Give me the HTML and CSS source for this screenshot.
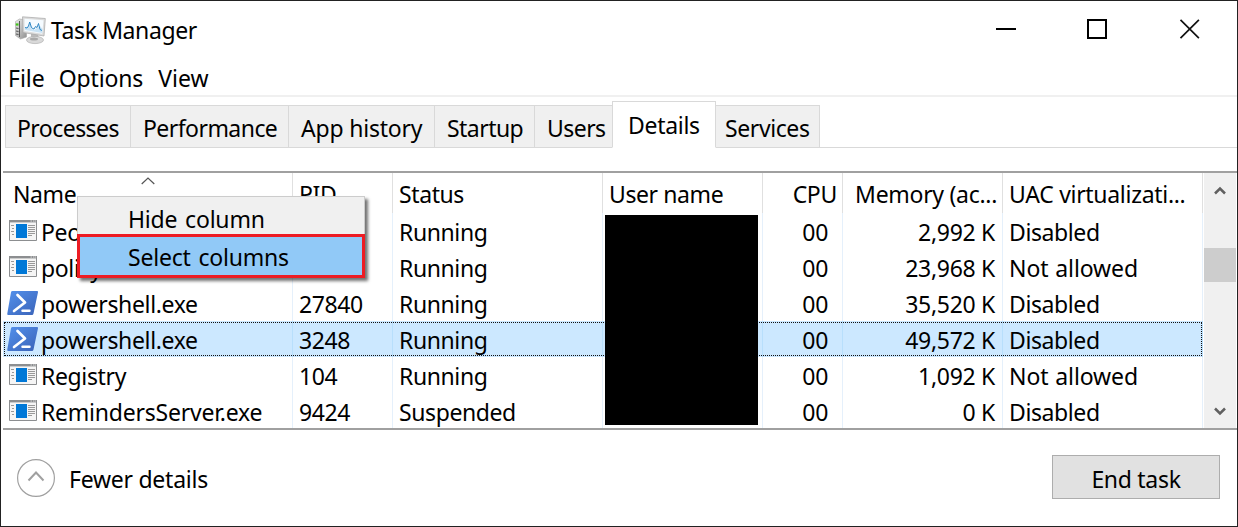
FILE: index.html
```html
<!DOCTYPE html>
<html lang="en">
<head>
<meta charset="utf-8">
<title>Task Manager</title>
<link rel="stylesheet" href="styles.css">
</head>
<body>
<svg class="defs" width="0" height="0">
  <defs>
    <linearGradient id="psg" x1="0" y1="0" x2="1" y2="1"><stop offset="0" stop-color="#5391ec"/><stop offset="1" stop-color="#3b63b8"/></linearGradient>
    <linearGradient id="metal" x1="0" y1="0" x2="1" y2="1"><stop offset="0" stop-color="#eee"/><stop offset="1" stop-color="#8f8f8f"/></linearGradient>
    <symbol id="app" viewBox="0 0 28 21">
      <path fill="#f5f5f5" d="M0 0h28v21H0z"/>
      <path fill="none" stroke="#8c8e90" d="M.5.5h27v20H.5z"/>
      <path fill="#8c8e90" d="M0 0h28v2.400H0z"/>
      <path stroke="#d9d9d9" d="M21.500 1h1.500M24 1h1.500M26 1h1"/>
      <path fill="#0078d7" d="M7 4h11v14H7z"/>
      <path stroke="#999" d="M2 5.500h3M3 8.500h2M2 11.500h3M3 14.500h2M19 5.500h7M19 7.500h7M19 9.500h7M19 11.500h7M19 13.500h7M19 15.500h4"/>
    </symbol>
    <symbol id="ps" viewBox="0 0 32 24">
      <path fill="url(#psg)" d="M5.500 0H30q1.300 0 1 1.300l-4.500 21.200Q26.200 24 25 24H1.200Q0 24 .3 22.500L4 1.300Q4.200 0 5.500 0z"/>
      <path fill="none" stroke="#fff" stroke-width="2.700" stroke-linecap="round" stroke-linejoin="round" d="M10.500 4l7.500 7.500L7 20"/>
      <path stroke="#fff" stroke-width="2.500" stroke-linecap="round" d="M15.500 19.700h7"/>
    </symbol>
  </defs>
</svg>
<div class="window">
  <header class="titlebar">
    <svg class="logo" width="32" height="30" viewBox="0 0 32 30">
      <path fill="url(#metal)" stroke="#a5a5a5" stroke-width=".6" d="M.5 5.500l4-2.500 7 1v17l-6 2-5-3.500z"/>
      <path stroke="#555" stroke-width="1" d="M1 12l2.500.5M1 15l2.500.5M1 18l2.500.5M4.500 5v16"/>
      <path stroke="#43c51c" stroke-width="2.200" d="M.8 8.500H3.500"/>
      <path fill="#bbb" d="M16 18h7l1 5h-8z"/>
      <ellipse cx="20" cy="24" rx="8.500" ry="3.600" fill="#d9d9d9" stroke="#b0b0b0" stroke-width=".7"/>
      <ellipse cx="19" cy="23" rx="4" ry="1.500" fill="#aaa"/>
      <path fill="#dcdcdc" stroke="#a6a6a6" stroke-width=".7" d="M7.500.8L30.300 2.500l-1.300 17.500L8 16.500z"/>
      <path fill="#f5fbff" d="M9.500 2.800l19 1.400-1.300 13.500L9.500 15z"/>
      <path fill="#c9e3f5" d="M10 12l3-1 2-5 2 7 2 1 3-2 3-2 2.500 3-.3 4L10 14z"/>
      <path fill="none" stroke="#2f87c4" stroke-width="1" d="M10 11.500l2 .5 1.500-2 1.200-4 1.600 5 1.200 1.500 1.500.5 1.500-2.500 1.500 1 1.500-4 1.500 6 2 1"/>
    </svg>
    <h1>Task Manager</h1>
    <svg class="controls" width="206" height="22" viewBox="0 0 206 22">
      <path fill="none" stroke="#000" stroke-width="2" d="M1 10h20M93 1h18v18H93z"/>
      <path fill="none" stroke="#111" stroke-width="1.700" d="M185.500.8l18.400 18.400M203.900.8l-18.400 18.400"/>
    </svg>
  </header>
  <nav class="menubar"><span class="m1">File</span><span class="m2">Options</span><span class="m3">View</span></nav>
  <div class="tabs">
    <div class="tab t1">Processes</div><div class="tab t2">Performance</div><div class="tab t3">App history</div><div class="tab t4">Startup</div><div class="tab t5">Users</div><div class="tab active">Details</div><div class="tab t7">Services</div><div class="rest"></div>
  </div>
  <main class="list">
    <div class="grid">
      <div class="row head"><div class="first">Name</div><div>PID</div><div>Status</div><div>User name</div><div class="num">CPU</div><div class="num mem">Memory (ac...</div><div class="uac">UAC virtualizati...</div></div>
      <div class="row"><div class="name"><svg class="app"><use href="#app"/></svg>Peo</div><div></div><div>Running</div><div></div><div class="num cpu">00</div><div class="num">2,992 K</div><div>Disabled</div></div>
      <div class="row"><div class="name"><svg class="app"><use href="#app"/></svg>policy</div><div></div><div>Running</div><div></div><div class="num cpu">00</div><div class="num">23,968 K</div><div class="wide">Not allowed</div></div>
      <div class="row"><div class="name"><svg class="ps"><use href="#ps"/></svg>powershell.exe</div><div>27840</div><div>Running</div><div></div><div class="num cpu">00</div><div class="num">35,520 K</div><div>Disabled</div></div>
      <div class="row selected"><div class="name"><svg class="ps"><use href="#ps"/></svg>powershell.exe</div><div>3248</div><div>Running</div><div></div><div class="num cpu">00</div><div class="num">49,572 K</div><div>Disabled</div></div>
      <div class="row"><div class="name"><svg class="app"><use href="#app"/></svg>Registry</div><div>104</div><div>Running</div><div></div><div class="num cpu">00</div><div class="num">1,092 K</div><div class="wide">Not allowed</div></div>
      <div class="row"><div class="name reminders"><svg class="app"><use href="#app"/></svg>RemindersServer.exe</div><div>9424</div><div>Suspended</div><div></div><div class="num cpu">00</div><div class="num">0 K</div><div>Disabled</div></div>
    </div>
    <div class="scrollbar">
      <svg width="12" height="10" viewBox="0 0 12 10"><path d="M1 7.500l5-5 5 5" /></svg>
      <div class="thumb"></div>
      <svg width="12" height="10" viewBox="0 0 12 10"><path d="M1 2.500l5 5 5-5" /></svg>
    </div>
    <svg class="sort" width="14" height="8" viewBox="0 0 14 8"><path fill="none" stroke="#555" stroke-width="1.200" d="M.7 7L7 1l6.300 6"/></svg>
    <div class="redacted"></div>
    <div class="context"><div>Hide column</div><div class="hot">Select columns</div></div>
  </main>
  <footer>
    <svg width="38" height="38" viewBox="0 0 38 38"><g fill="none" stroke="#a0a0a0"><circle cx="19" cy="19" r="18.400" stroke-width="1.200"/><path stroke-width="2" d="M11.500 21.500l7.500-8 7.500 8"/></g></svg>
    <span class="fewer">Fewer details</span>
    <button>End task</button>
  </footer>
</div>
</body>
</html>
```
FILE: styles.css
```css
* { box-sizing: border-box; }
body { margin: 0; font: 23px/32px "Noto Sans", sans-serif; color: #000; letter-spacing: -.4px; white-space: nowrap; }
.defs { position: absolute; }
.window { width: 1238px; height: 527px; border: 1px solid #222; background: #fff; overflow: hidden; display: flex; flex-direction: column; }
.titlebar { height: 61px; display: flex; align-items: flex-start; padding: 13px 36px 0 14px; }
.logo { margin-top: 2px; }
h1 { font: inherit; margin: 0 0 0 4px; }
.controls { margin: 5px 0 0 auto; }
.menubar { height: 35px; border-bottom: 2px solid #f0f0f0; display: flex; padding-left: 7px; line-height: 32px; letter-spacing: 0; }
.menubar span { margin-right: 14px; }
.menubar .m2 { letter-spacing: -.15px; margin-right: 15px; }
.tabs { height: 51px; display: flex; align-items: flex-end; padding-left: 4px; }
.tab { height: 43px; background: #f0f0f0; border: 1px solid #d9d9d9; border-right: 0; padding: 6px 0 0 12px; letter-spacing: -.55px; }
.t1 { width: 125px; padding-left: 11px; } .t2 { width: 158px; } .t3 { width: 146px; letter-spacing: -.2px; } .t4 { width: 100px; } .t5 { width: 78px; }
.tab.active { width: 104px; height: 47px; background: #fff; border-right: 1px solid #d9d9d9; border-bottom-color: #fff; padding: 7px 0 0 15px; letter-spacing: -.3px; }
.t7 { width: 104px; border-left: 0; border-right: 1px solid #d9d9d9; padding-left: 9px; letter-spacing: -.4px; }
.rest { flex: 1; height: 1px; background: #d9d9d9; }
.list { position: relative; margin: 23px 0 0 2px; height: 259px; border-top: 2px solid #a0a0a0; border-bottom: 2px solid #a0a0a0; display: flex; }
.grid { width: 1201px; overflow: hidden; }
.row { display: grid; grid-template-columns: 290px 100px 210px 160px 80px 160px 200px; width: 1200px; height: 36px; line-height: 38px; }
.row > div { border-right: 1px solid #e5f0fb; padding-left: 6px; }
.head { height: 40px; line-height: 43px; }
.head > div { border-right-color: #e0e0e0; }
.row > .first { padding-left: 10px; }
.row > .num { text-align: right; padding: 0 7px 0 0; letter-spacing: -.3px; }
.row > .cpu { padding-right: 14px; }
.row.head > .num { padding-right: 5px; }
.row.head > .mem, .row.head > .uac { letter-spacing: -.3px; }
.row > .wide { word-spacing: 1px; letter-spacing: -.1px; }
.name { display: flex; letter-spacing: -.35px; }
.reminders { letter-spacing: -.22px; }
.app { width: 28px; height: 21px; margin: 7px 4px 0 0; }
.ps { width: 32px; height: 24px; margin: 6px 2px 0 -2px; }
.selected { background: #cce8ff; outline: 1px dotted #111; outline-offset: -2px; }
.selected > div { border-color: #b8dffc; }
.scrollbar { width: 32px; background: #f0f0f0; display: flex; flex-direction: column; align-items: center; padding: 13px 0 12px; }
.scrollbar path { fill: none; stroke: #606060; stroke-width: 2.5; }
.thumb { width: 32px; height: 34px; margin: 52px 0 auto; background: #cdcdcd; }
.sort { position: absolute; left: 138px; top: 4px; }
.redacted { position: absolute; left: 602px; top: 42px; width: 153px; height: 210px; background: #000; }
.context { position: absolute; left: 74px; top: 23px; width: 288px; height: 82px; background: #f0f0f0; border: 1px solid #ccc; box-shadow: 3px 3px 3px rgba(0,0,0,.55); padding-top: 3px; letter-spacing: -.2px; word-spacing: 2px; }
.context div { height: 34px; line-height: 39px; padding-left: 50px; }
.context .hot { height: 44px; margin: 0 -1px; background: #91c9f7; border: 3px solid #ed1c24; line-height: 41px; padding-left: 48px; }
footer { display: flex; padding: 25px 17px 0 16px; }
footer > svg { margin-top: 4px; }
.fewer { margin: 8px 0 0 14px; letter-spacing: -.25px; }
button { margin-left: auto; width: 168px; height: 44px; background: #e1e1e1; border: 1px solid #adadad; font: inherit; letter-spacing: -.3px; color: #000; padding: 3px 0 0; }
```
